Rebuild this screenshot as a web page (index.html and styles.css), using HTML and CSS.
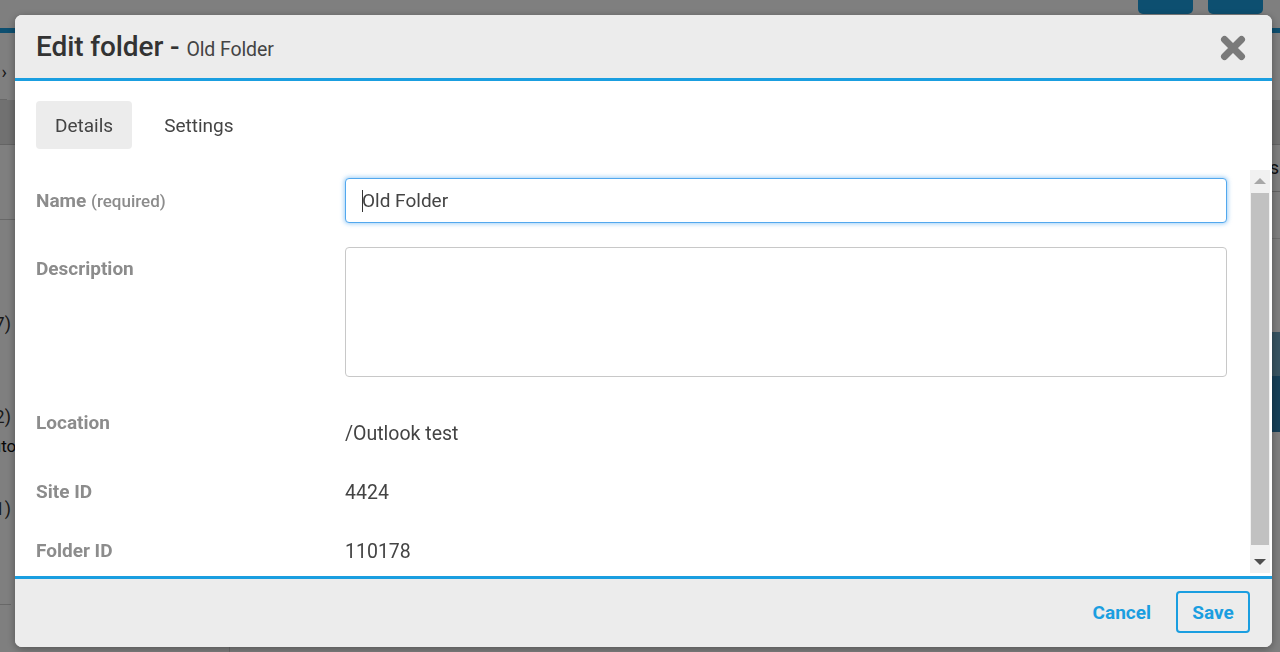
FILE: index.html
```html
<!DOCTYPE html>
<html lang="en">
<head>
<meta charset="utf-8">
<title>Edit folder</title>
<link rel="stylesheet" href="styles.css">
</head>
<body>
<div class="app">
  <header class="app-top">
    <div class="app-actions">
      <span class="app-btn"></span>
      <span class="app-btn"></span>
    </div>
  </header>
  <div class="app-main">
    <div class="app-toolbar"><span class="crumb">Folders &rsaquo;</span></div>
    <div class="app-band"></div>
    <div class="app-panes">
      <nav class="app-nav">
        <div class="nav-top"></div>
        <div class="nav-list">
          <span class="nav-item nav-item--a">Inbox (17)</span>
          <span class="nav-item nav-item--b">Drafts (2)</span>
          <span class="nav-note">Sort: automatic</span>
          <span class="nav-item nav-item--c">Archive (1)</span>
        </div>
      </nav>
      <section class="app-content">
        <div class="content-cols">Items</div>
        <div class="content-row"></div>
        <div class="content-row content-row--hi"></div>
        <div class="content-row content-row--sel"></div>
      </section>
    </div>
  </div>
</div>

<div class="overlay"></div>

<div class="modal" role="dialog" aria-labelledby="modal-title">
  <header class="modal-head">
    <h1 class="modal-title" id="modal-title">Edit folder - <span class="modal-sub">Old Folder</span></h1>
    <button class="modal-close" type="button" aria-label="Close">
      <svg width="26" height="26" viewBox="0 0 26 26" aria-hidden="true">
        <path d="M4.5 4.5 L21.5 21.5 M21.5 4.5 L4.5 21.5" stroke="#7a7a7a" stroke-width="7" stroke-linecap="round" fill="none"/>
      </svg>
    </button>
  </header>

  <div class="modal-body">
    <div class="tabs">
      <button class="tab tab--active" type="button">Details</button>
      <button class="tab" type="button">Settings</button>
    </div>

    <div class="form-area">
      <div class="form-scroll">
        <div class="form-row">
          <label class="form-label form-label--first" for="f-name">Name <span class="form-hint">(required)</span></label>
          <div class="form-field">
            <input class="form-input form-input--focus" id="f-name" type="text" value="Old Folder">
            <span class="caret"></span>
          </div>
        </div>
        <div class="form-row">
          <label class="form-label" for="f-desc">Description</label>
          <textarea class="form-textarea" id="f-desc"></textarea>
        </div>
        <div class="form-row">
          <div class="form-label">Location</div>
          <div class="form-value form-value--low">/Outlook test</div>
        </div>
        <div class="form-row">
          <div class="form-label">Site ID</div>
          <div class="form-value">4424</div>
        </div>
        <div class="form-row">
          <div class="form-label">Folder ID</div>
          <div class="form-value">110178</div>
        </div>
      </div>

      <div class="scrollbar" aria-hidden="true">
        <span class="scrollbar-btn scrollbar-btn--up"></span>
        <span class="scrollbar-track"><span class="scrollbar-thumb"></span></span>
        <span class="scrollbar-btn scrollbar-btn--down"></span>
      </div>
    </div>
  </div>

  <footer class="modal-foot">
    <button class="btn btn--link" type="button">Cancel</button>
    <button class="btn btn--outline" type="button">Save</button>
  </footer>
</div>
</body>
</html>
```
FILE: styles.css
```css
* { box-sizing: border-box; }

html, body {
  margin: 0;
  height: 100%;
  overflow: hidden;
}

body {
  font-family: Roboto, "Liberation Sans", Arial, sans-serif;
  color: #333;
  background: #fff;
}

/* ---------- application behind the dialog ---------- */
.app {
  height: 100vh;
  display: flex;
  flex-direction: column;
  background: #fff;
}

.app-top {
  flex: none;
  height: 33px;
  border-bottom: 5px solid #1a9ee0;
  display: flex;
  justify-content: flex-end;
  padding-right: 17px;
}

.app-actions {
  display: flex;
  gap: 15px;
}

.app-btn {
  width: 55px;
  height: 14px;
  background: #1a9ee0;
  border-radius: 0 0 5px 5px;
}

.app-main {
  flex: 1;
  display: flex;
  flex-direction: column;
  font-size: 18px;
  color: #222;
}

.app-toolbar {
  flex: none;
  height: 67px;
  border-bottom: 1px solid #d0d0d0;
  display: flex;
  align-items: center;
  padding-top: 10px;
  width: 7px;
  justify-content: flex-end;
  white-space: nowrap;
}

.crumb { color: #333; }

.app-band {
  flex: none;
  height: 45px;
  background: #e2e2e2;
  border-bottom: 1px solid #c8c8c8;
}

.app-panes {
  flex: 1;
  display: flex;
}

.app-nav {
  width: 230px;
  border-right: 1px solid #ddd;
}

.nav-top {
  height: 75px;
  border-bottom: 1px solid #d0d0d0;
}

/* right-aligned folder names and counts */
.nav-list {
  width: 11px;
  display: flex;
  flex-direction: column;
  align-items: flex-end;
  white-space: nowrap;
  line-height: 22px;
  padding-bottom: 84px;
  border-bottom: 1px solid #d0d0d0;
}

.nav-item { color: #333; }
.nav-item--a { margin-top: 93px; }
.nav-item--b { margin-top: 71px; }
.nav-item--c { margin-top: 41px; }

.nav-note {
  margin-top: 7px;
  margin-right: -48px;
  font-size: 17px;
  color: #111;
}

.app-content {
  flex: 1;
  display: flex;
  flex-direction: column;
}

.content-cols {
  height: 47px;
  padding: 12px 0;
  border-bottom: 1px solid #c8c8c8;
  text-align: right;
  padding-right: 1px;
}

.content-row {
  height: 47px;
  border-bottom: 1px solid #ddd;
}

.content-row--hi { margin-top: 93px; height: 44px; background: #6fa8c4; border: 0; }
.content-row--sel { height: 56px; background: #2a7fb0; border: 0; }

.overlay {
  position: fixed;
  inset: 0;
  background: rgba(0, 0, 0, 0.5);
}

/* ---------- dialog ---------- */
.modal {
  position: fixed;
  left: 15px;
  top: 15px;
  width: 1257px;
  height: 632px;
  background: #fff;
  border-radius: 7px;
  overflow: hidden;
  display: flex;
  flex-direction: column;
  box-shadow: 0 2px 8px rgba(0, 0, 0, 0.35);
}

.modal-head {
  flex: none;
  height: 66px;
  background: #ececec;
  border-bottom: 3px solid #1a9ee0;
  display: flex;
  align-items: center;
  justify-content: space-between;
  padding: 0 26px 0 21px;
}

.modal-title {
  margin: 0;
  font-size: 28px;
  font-weight: 500;
  color: #333;
  letter-spacing: -0.1px;
}

.modal-sub {
  font-size: 19.5px;
  font-weight: 400;
  color: #444;
}

.modal-close {
  border: 0;
  background: none;
  padding: 0;
  width: 26px;
  height: 26px;
  display: flex;
  cursor: pointer;
  margin-top: 2px;
}

.modal-body {
  flex: 1;
  min-height: 0;
  display: flex;
  flex-direction: column;
}

.tabs {
  flex: none;
  display: flex;
  gap: 13px;
  padding: 20px 21px 21px;
}

.tab {
  height: 48px;
  padding: 0 19px;
  border: 0;
  border-radius: 4px;
  background: transparent;
  font-family: inherit;
  font-size: 19px;
  color: #444;
}

.tab--active { background: #ececec; }

/* form with its own scrollbar */
.form-area {
  flex: 1;
  min-height: 0;
  display: flex;
}

.form-scroll {
  flex: 1;
  overflow: hidden;
  padding: 8px 23px 0 21px;
}

.scrollbar {
  flex: none;
  width: 20px;
  margin: 0 2px 3px 0;
  display: flex;
  flex-direction: column;
  background: #f1f1f1;
}

.scrollbar-btn {
  flex: none;
  height: 22px;
  display: flex;
  align-items: center;
  justify-content: center;
}

.scrollbar-btn::before {
  content: "";
  width: 0;
  height: 0;
  border-left: 6px solid transparent;
  border-right: 6px solid transparent;
}

.scrollbar-btn--up::before { border-bottom: 6px solid #a8a8a8; }
.scrollbar-btn--down::before { border-top: 6px solid #505050; }

.scrollbar-track {
  flex: 1;
  display: flex;
  flex-direction: column;
  padding: 1px 1px 6px 1px;
}

.scrollbar-thumb {
  flex: 1;
  background: #c1c1c1;
}

.form-row {
  display: grid;
  grid-template-columns: 309px 1fr;
  margin-bottom: 24px;
}

.form-label {
  padding-top: 11px;
  line-height: 22px;
  font-size: 19px;
  font-weight: 700;
  color: #8c8c8c;
}

.form-label--first { padding-top: 12px; }

.form-hint {
  font-size: 17px;
  font-weight: 500;
}

.form-field {
  position: relative;
  display: flex;
}

.form-input {
  flex: 1;
  height: 45px;
  padding: 0 16px;
  border: 1px solid #c8c8c8;
  border-radius: 4px;
  font-family: inherit;
  font-size: 19px;
  color: #444;
  outline: none;
}

.form-input--focus {
  border-color: #52a8ee;
  box-shadow: 0 0 4px 1px rgba(82, 168, 238, 0.55);
}

/* text cursor at the start of the focused field */
.caret {
  position: absolute;
  left: 17px;
  top: 12px;
  width: 1px;
  height: 22px;
  background: #333;
}

.form-textarea {
  height: 130px;
  border: 1px solid #c8c8c8;
  border-radius: 4px;
  resize: none;
  font-family: inherit;
  font-size: 19px;
  outline: none;
}

.form-value {
  padding-top: 12px;
  padding-bottom: 1px;
  line-height: 22px;
  font-size: 19.5px;
  color: #444;
}

.form-value--low { padding-top: 22px; }

.modal-foot {
  flex: none;
  height: 71px;
  background: #ececec;
  border-top: 3px solid #1a9ee0;
  display: flex;
  align-items: center;
  justify-content: flex-end;
  gap: 25px;
  padding: 0 22px 2px 0;
}

.btn {
  font-family: inherit;
  font-size: 19px;
  font-weight: 700;
  color: #1a9ee0;
  background: none;
  cursor: pointer;
}

.btn--link {
  border: 0;
  padding: 0;
}

.btn--outline {
  height: 42px;
  width: 74px;
  border: 2px solid #1a9ee0;
  border-radius: 4px;
  padding: 0;
}
```
